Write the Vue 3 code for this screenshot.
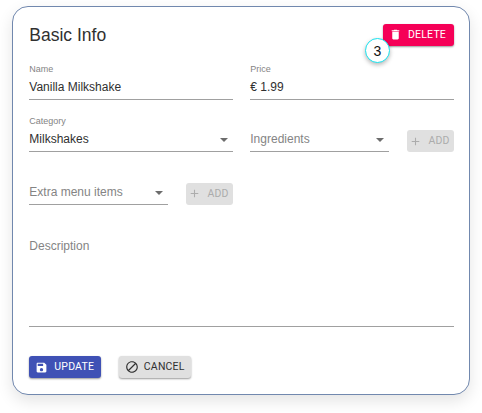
<script setup>
const icons = {
  trash: 'M6 19c0 1.1.9 2 2 2h8c1.1 0 2-.9 2-2V7H6v12zM19 4h-3.500l-1-1h-5l-1 1H5v2h14V4z',
  plus: 'M19 13h-6v6h-2v-6H5v-2h6V5h2v6h6v2z',
  save: 'M17 3H5c-1.110 0-2 .9-2 2v14c0 1.100.890 2 2 2h14c1.100 0 2-.9 2-2V7l-4-4zm-5 16c-1.660 0-3-1.340-3-3s1.340-3 3-3 3 1.340 3 3-1.340 3-3 3zm3-10H5V5h10v4z',
  block: 'M12 2C6.480 2 2 6.480 2 12s4.480 10 10 10 10-4.480 10-10S17.520 2 12 2zM4 12c0-4.420 3.580-8 8-8 1.850 0 3.550.630 4.900 1.690L5.690 16.900C4.630 15.550 4 13.850 4 12zm8 8c-1.850 0-3.550-.630-4.900-1.690L18.310 7.100C19.370 8.450 20 10.150 20 12c0 4.420-3.580 8-8 8z',
}
</script>

<template>
  <main class="page">
    <form class="card" @submit.prevent>
      <header class="head">
        <h1 class="title">Basic Info</h1>
        <div class="delete-wrap">
          <button type="button" class="btn danger">
            <svg viewBox="0 0 24 24"><path :d="icons.trash" /></svg><span>DELETE</span>
          </button>
          <span class="badge">3</span>
        </div>
      </header>

      <div class="row">
        <div class="field"><span class="label">Name</span><span class="value">Vanilla Milkshake</span></div>
        <div class="field"><span class="label">Price</span><span class="value">€ 1.99</span></div>
      </div>

      <div class="row">
        <div class="field">
          <span class="label">Category</span>
          <span class="value">Milkshakes</span><i class="arrow"></i>
        </div>
        <div class="pair">
          <div class="field"><span class="value hint">Ingredients</span><i class="arrow"></i></div>
          <button type="button" class="btn disabled">
            <svg viewBox="0 0 24 24"><path :d="icons.plus" /></svg><span>ADD</span>
          </button>
        </div>
      </div>

      <div class="row">
        <div class="pair">
          <div class="field"><span class="value hint">Extra menu items</span><i class="arrow"></i></div>
          <button type="button" class="btn disabled">
            <svg viewBox="0 0 24 24"><path :d="icons.plus" /></svg><span>ADD</span>
          </button>
        </div>
      </div>

      <div class="area"><span class="value hint">Description</span></div>

      <footer class="actions">
        <button type="button" class="btn primary">
          <svg viewBox="0 0 24 24"><path :d="icons.save" /></svg><span>UPDATE</span>
        </button>
        <button type="button" class="btn neutral">
          <svg viewBox="0 0 24 24"><path :d="icons.block" /></svg><span>CANCEL</span>
        </button>
      </footer>
    </form>
  </main>
</template>

<style>
body {
  background: #fff;
}
</style>

<style scoped>
* {
  box-sizing: border-box;
}
.page {
  height: 413px;
  padding: 6px 12px 0;
  overflow: hidden;
  font-family: "Liberation Sans", Arial, sans-serif;
  color: #303030;
}
.card {
  width: 458px;
  height: 389px;
  padding: 16.500px 15px 0 16.300px;
  border: 1px solid #7188ae;
  border-radius: 16px;
  background: #fff;
  box-shadow: 0 6px 16px rgba(0, 0, 0, 0.11);
}
.head {
  display: flex;
  justify-content: space-between;
  height: 23.500px;
}
.title {
  margin: 0;
  font-size: 17.500px;
  font-weight: 400;
  line-height: 23px;
}
.delete-wrap {
  position: relative;
  height: 22px;
}
.badge {
  position: absolute;
  left: -18px;
  top: 14px;
  width: 25px;
  height: 25px;
  border: 1.500px solid #19e3ef;
  border-radius: 50%;
  background: #fff;
  color: #111;
  font-size: 14px;
  line-height: 25px;
  text-align: center;
  box-shadow: 0 2px 4px rgba(0, 0, 0, 0.28);
}
.row {
  display: grid;
  grid-template-columns: 203.700px 203.700px;
  column-gap: 17.300px;
  height: 52.500px;
  align-items: end;
}
.pair {
  display: grid;
  grid-template-columns: 1fr 47px;
  column-gap: 17.500px;
  align-items: end;
}
.field {
  position: relative;
  display: flex;
  flex-direction: column;
  border-bottom: 1px solid #a0a0a0;
}
.label {
  margin-bottom: 2px;
  color: #848484;
  font-size: 9px;
  line-height: 12px;
}
.value {
  padding-bottom: 2px;
  font-size: 12px;
  line-height: 20px;
  white-space: nowrap;
}
.hint {
  color: #848484;
}
.arrow {
  position: absolute;
  right: 5px;
  bottom: 9px;
  border: 4px solid transparent;
  border-top-color: #6c6c6c;
  border-bottom: 0;
}
.area {
  height: 98px;
  margin-top: 24px;
  padding-top: 7px;
  border-bottom: 1px solid #a0a0a0;
  width: 424.700px;
}
.actions {
  display: flex;
  gap: 18px;
  margin-top: 29.500px;
}
.btn {
  display: flex;
  align-items: center;
  height: 22px;
  padding: 0 0 0 6px;
  border: 0;
  border-radius: 3px;
  font: 400 10.500px/22px Roboto, "Liberation Sans", sans-serif;
  letter-spacing: 0.200px;
  white-space: nowrap;
  box-shadow: 0 1px 2px rgba(0, 0, 0, 0.4);
}
.btn svg {
  flex: none;
  width: 13px;
  height: 13px;
  margin-right: 6px;
  fill: currentColor;
}
.danger {
  width: 71px;
  background: #f50057;
  color: #fff;
}
.primary {
  width: 71.500px;
  background: #3f51b5;
  color: #fff;
}
.neutral {
  width: 72px;
  background: #e0e0e0;
  color: #303030;
}
.neutral svg {
  width: 14px;
  height: 14px;
  margin-right: 5px;
}
.disabled {
  width: 47px;
  padding-left: 2.500px;
  background: #e0e0e0;
  color: #acacac;
  box-shadow: none;
}
</style>
